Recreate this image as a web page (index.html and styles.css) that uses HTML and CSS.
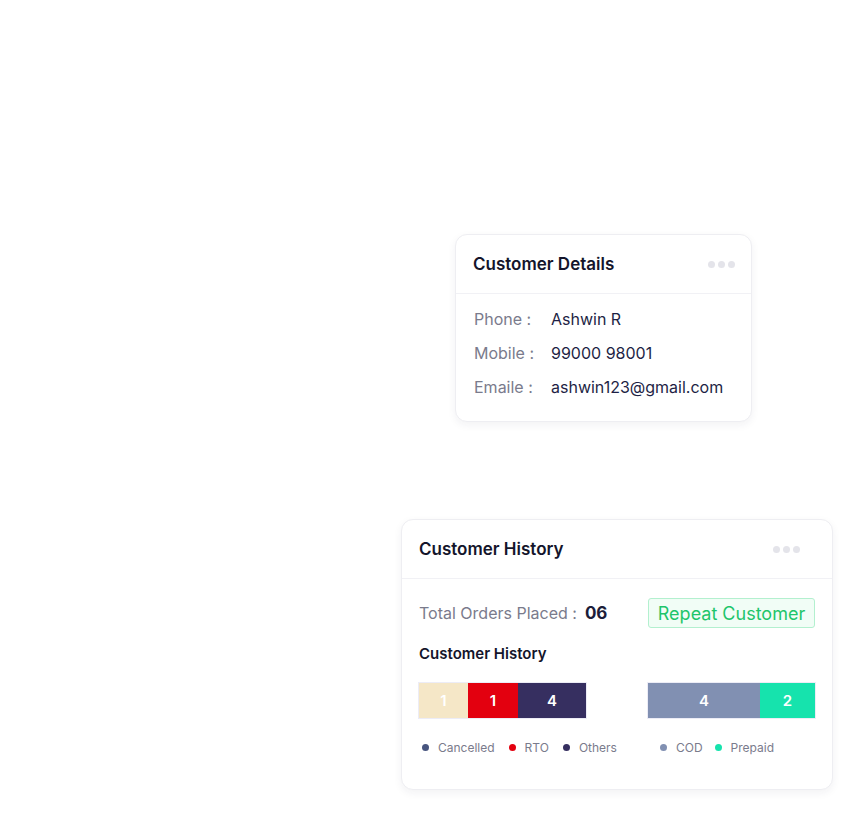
FILE: index.html
```html
<!DOCTYPE html>
<html lang="en">
<head>
    <meta charset="UTF-8">
    <meta name="viewport" content="width=device-width, initial-scale=1.0">
    <title>Customer</title>
    <link rel="stylesheet" href="styles.css">
</head>
<body>
    <div class="canvas">
        <div class="card details">
            <div class="card-head">
                <h2>Customer Details</h2>
                <div class="dots"><span></span><span></span><span></span></div>
            </div>
            <div class="card-body">
                <div class="row"><span class="label">Phone :</span><span class="value">Ashwin R</span></div>
                <div class="row"><span class="label">Mobile :</span><span class="value">99000 98001</span></div>
                <div class="row"><span class="label">Emaile :</span><span class="value">ashwin123@gmail.com</span></div>
            </div>
        </div>

        <div class="card history">
            <div class="card-head">
                <h2>Customer History</h2>
                <div class="dots"><span></span><span></span><span></span></div>
            </div>
            <div class="card-body">
                <div class="orders">
                    <span class="orders-label">Total Orders Placed :</span>
                    <span class="orders-count">06</span>
                    <span class="badge">Repeat Customer</span>
                </div>
                <h3>Customer History</h3>
                <div class="charts">
                    <div class="chart">
                        <div class="bar">
                            <div class="seg cancelled" style="flex: 49">1</div>
                            <div class="seg rto" style="flex: 50">1</div>
                            <div class="seg others" style="flex: 68">4</div>
                        </div>
                        <div class="legend">
                            <span class="key"><i class="dot navy"></i>Cancelled</span>
                            <span class="key"><i class="dot red"></i>RTO</span>
                            <span class="key"><i class="dot purple"></i>Others</span>
                        </div>
                    </div>
                    <div class="chart">
                        <div class="bar">
                            <div class="seg cod" style="flex: 112">4</div>
                            <div class="seg prepaid" style="flex: 55">2</div>
                        </div>
                        <div class="legend indent">
                            <span class="key"><i class="dot slate"></i>COD</span>
                            <span class="key"><i class="dot green"></i>Prepaid</span>
                        </div>
                    </div>
                </div>
            </div>
        </div>
    </div>
</body>
</html>
```

FILE: styles.css
```css
body {
    margin: 0;
    padding: 0;
    background: #ffffff;
    font-family: Inter, "Noto Sans", sans-serif;
    color: #1c1d3a;
}

.canvas {
    display: flex;
    flex-direction: column;
    align-items: flex-start;
    padding-bottom: 27px;
}

.card {
    box-sizing: border-box;
    background: #ffffff;
    border: 1px solid #eeeef2;
    border-radius: 12px;
    box-shadow: 0 3px 8px rgba(30, 30, 60, 0.06);
}

.details {
    width: 297px;
    margin-top: 234px;
    margin-left: 455px;
}

.history {
    width: 432px;
    margin-top: 97px;
    margin-left: 401px;
}

.card-head {
    height: 58px;
    display: flex;
    align-items: center;
    justify-content: space-between;
    padding: 0 16px 0 17px;
    border-bottom: 1px solid #f1f1f5;
}

.history .card-head {
    padding-right: 32px;
}

.card-head h2 {
    margin: 0;
    font-size: 17px;
    font-weight: 600;
    color: #14152b;
}

.dots {
    display: flex;
    gap: 3px;
}

.dots span {
    width: 7px;
    height: 7px;
    border-radius: 50%;
    background: #e4e4ea;
}

.details .card-body {
    padding: 8px 17px 17px 18px;
}

.row {
    display: flex;
    height: 34px;
    align-items: center;
    font-size: 16px;
}

.label {
    width: 77px;
    color: #7a7b8c;
}

.value {
    color: #1e1f45;
}

.history .card-body {
    padding: 19px 17px 34px;
}

.orders {
    display: flex;
    align-items: center;
}

.orders-label {
    font-size: 16px;
    color: #7a7b8c;
    margin-right: 8px;
}

.orders-count {
    font-size: 17px;
    font-weight: 700;
    color: #1c1d3a;
}

.badge {
    margin-left: auto;
    box-sizing: border-box;
    width: 167px;
    height: 30px;
    display: flex;
    align-items: center;
    justify-content: center;
    font-size: 18px;
    color: #1ec56b;
    background: #f1fdf6;
    border: 1.5px solid #b3f0cf;
    border-radius: 3px;
}

.history h3 {
    margin: 15px 0 0;
    height: 21px;
    line-height: 21px;
    font-size: 15px;
    font-weight: 600;
    color: #14152b;
}

.charts {
    display: grid;
    grid-template-columns: 167px 167px;
    column-gap: 62px;
    margin-top: 19px;
}

.bar {
    display: flex;
    height: 35px;
    box-shadow: 0 0 0 1px #ececf6;
}

.seg {
    display: flex;
    align-items: center;
    justify-content: center;
    color: #ffffff;
    font-size: 15px;
    font-weight: 600;
}

.cancelled { background: #f5e7c7; }
.rto { background: #e3000f; }
.others { background: #362f60; }
.cod { background: #8190b2; }
.prepaid { background: #16e3ad; }

.legend {
    display: flex;
    gap: 14px;
    margin-top: 22px;
    padding-left: 3px;
    font-size: 12px;
    color: #7a7b8c;
    white-space: nowrap;
}

.legend.indent {
    padding-left: 12px;
    gap: 12px;
}

.key {
    display: flex;
    align-items: center;
}

.dot {
    width: 7px;
    height: 7px;
    border-radius: 50%;
    margin-right: 9px;
}

.navy { background: #48557f; }
.red { background: #e3000f; }
.purple { background: #362f60; }
.slate { background: #8190b2; }
.green { background: #16e3ad; }
```
